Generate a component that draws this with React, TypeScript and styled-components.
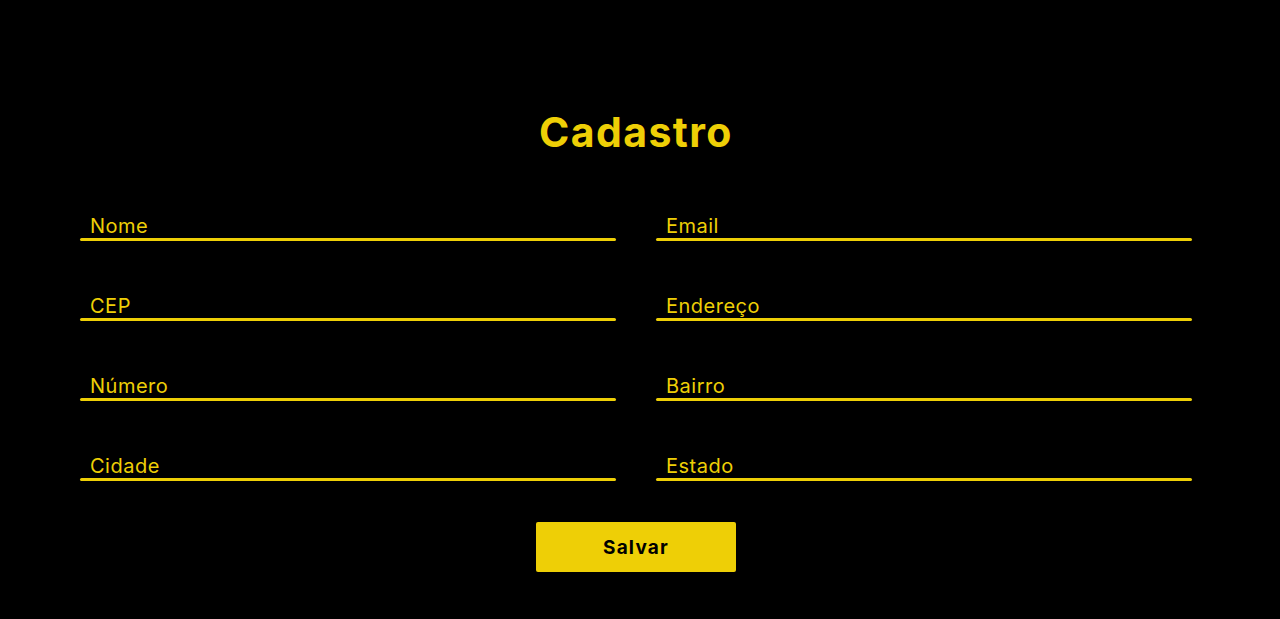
import React from "react";
import styled, { createGlobalStyle } from "styled-components";

const Global = createGlobalStyle`
  html, body { margin: 0; padding: 0; background: #000; }
  body { font-family: "Inter", "Open Sans", sans-serif; }
`;

const YELLOW = "#eecf06";

const Page = styled.main`
  width: 1112px;
  margin-left: 80px;
  padding-top: 104px;
  display: flex;
  flex-direction: column;
  align-items: center;
`;

const Title = styled.h1`
  margin: 0;
  height: 56px;
  line-height: 56px;
  font-family: "Inter", sans-serif;
  font-weight: 700;
  font-size: 41px;
  letter-spacing: 1.4px;
  color: ${YELLOW};
`;

const Grid = styled.div`
  margin-top: 54px;
  width: 100%;
  display: grid;
  grid-template-columns: 1fr 1fr;
  column-gap: 40px;
  row-gap: 53px;
`;

const Field = styled.label`
  display: flex;
  flex-direction: column;
  cursor: text;
`;

const LabelText = styled.span`
  padding-left: 10px;
  height: 24px;
  line-height: 24px;
  font-family: "Inter", sans-serif;
  font-weight: 400;
  font-size: 20px;
  letter-spacing: 0.5px;
  color: ${YELLOW};
`;

const Line = styled.span`
  display: block;
  height: 3px;
  border-radius: 2px;
  background: ${YELLOW};
`;

const Button = styled.button`
  margin-top: 41px;
  width: 200px;
  height: 50px;
  border: none;
  border-radius: 2px;
  background: ${YELLOW};
  color: #000;
  font-family: "Inter", sans-serif;
  font-weight: 700;
  font-size: 19px;
  letter-spacing: 1.2px;
  cursor: pointer;
`;

const fields = ["Nome", "Email", "CEP", "Endereço", "Número", "Bairro", "Cidade", "Estado"];

export default function App() {
  return (
    <>
      <Global />
      <Page>
        <Title>Cadastro</Title>
        <Grid>
          {fields.map((f) => (
            <Field key={f}>
              <LabelText>{f}</LabelText>
              <Line />
            </Field>
          ))}
        </Grid>
        <Button>Salvar</Button>
      </Page>
    </>
  );
}
